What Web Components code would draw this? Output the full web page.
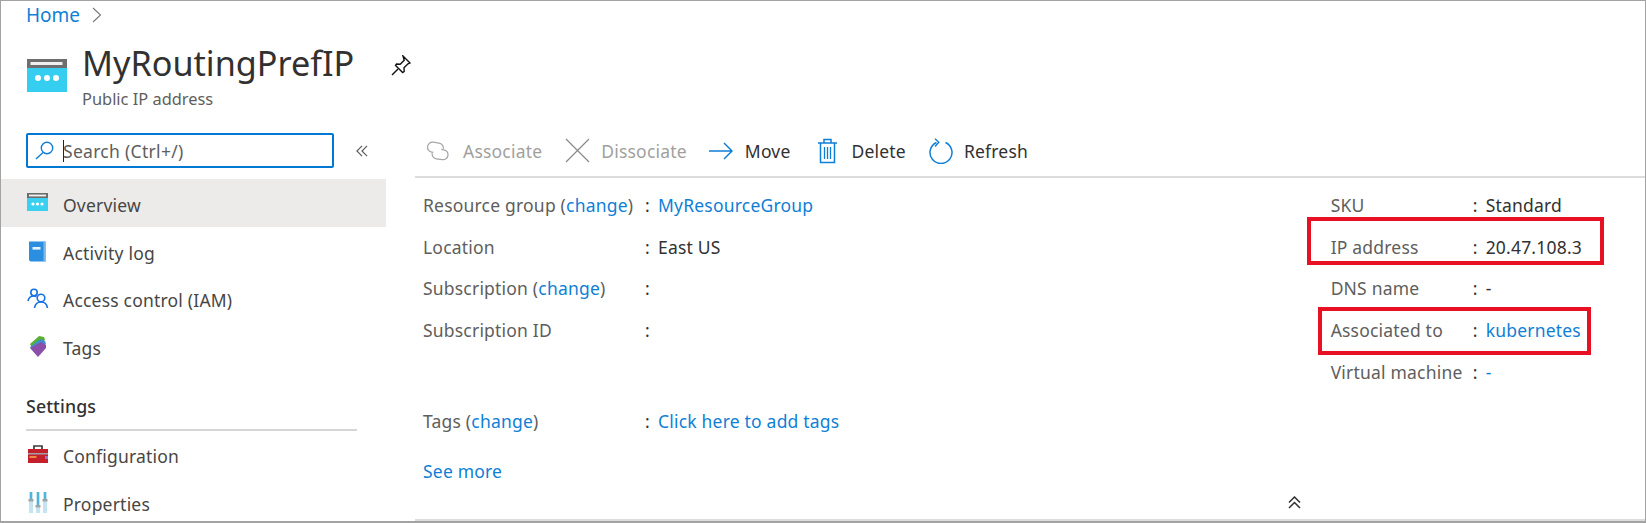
<!DOCTYPE html>
<html lang="en"><head><meta charset="utf-8"><title>MyRoutingPrefIP</title>
<style>
html,body{margin:0;padding:0;background:#fff}
body{font-family:"Noto Sans","Open Sans",sans-serif;color:#323130}
az-row a,az-essentials>a{color:#0f7fd6}
</style></head><body>
<az-page>
  <az-breadcrumb slot="crumb">Home</az-breadcrumb>
  <az-title slot="title" heading="MyRoutingPrefIP" sub="Public IP address"></az-title>
  <az-sidebar slot="side">
    <az-search></az-search>
    <az-nav icon="overview" active>Overview</az-nav>
    <az-nav icon="log">Activity log</az-nav>
    <az-nav icon="iam">Access control (IAM)</az-nav>
    <az-nav icon="tags">Tags</az-nav>
    <az-navhead>Settings</az-navhead>
    <az-nav icon="config">Configuration</az-nav>
    <az-nav icon="props">Properties</az-nav>
  </az-sidebar>
  <az-main slot="main">
    <az-toolbar>
      <az-tool icon="link" disabled style="--iw:26px;--gap:13px;--mr:23px">Associate</az-tool>
      <az-tool icon="x" disabled style="--iw:25px;--gap:11px;--mr:22px">Dissociate</az-tool>
      <az-tool icon="arrow" style="--iw:24px;--gap:12px;--mr:26px">Move</az-tool>
      <az-tool icon="trash" style="--iw:21px;--gap:14px;--mr:23px">Delete</az-tool>
      <az-tool icon="refresh" style="--iw:24px;--gap:11px;--mr:0px">Refresh</az-tool>
    </az-toolbar>
    <az-essentials>
      <az-col slot="left" style="--lw:222px">
        <az-row><span slot="label">Resource group (<a>change</a>)</span><a>MyResourceGroup</a></az-row>
        <az-row><span slot="label">Location</span>East US</az-row>
        <az-row><span slot="label">Subscription (<a>change</a>)</span></az-row>
        <az-row><span slot="label">Subscription ID</span></az-row>
        <az-row class="tags"><span slot="label">Tags (<a>change</a>)</span><a>Click here to add tags</a></az-row>
      </az-col>
      <az-col slot="right" style="--lw:142px">
        <az-row><span slot="label">SKU</span>Standard</az-row>
        <az-row marked="wide"><span slot="label">IP address</span>20.47.108.3</az-row>
        <az-row><span slot="label">DNS name</span>-</az-row>
        <az-row marked="narrow"><span slot="label">Associated to</span><a>kubernetes</a></az-row>
        <az-row><span slot="label">Virtual machine</span><a>-</a></az-row>
      </az-col>
      <a slot="more">See more</a>
    </az-essentials>
  </az-main>
</az-page>
<script>
const ICONS={
overview:`<svg viewBox="0 0 22 22" width="22" height="22"><rect x="0" y="1" width="21" height="5" fill="#6d6d6d"/><rect x="2" y="2.6" width="17" height="1.8" fill="#f2f2f2"/><rect x="0" y="6" width="21" height="13" fill="#3cd0f0"/><circle cx="6" cy="12" r="1.6" fill="#fff"/><circle cx="10.5" cy="12" r="1.6" fill="#fff"/><circle cx="15" cy="12" r="1.6" fill="#fff"/></svg>`,
log:`<svg viewBox="0 0 22 22" width="22" height="22"><path d="M2 1.5h16.500v20H4a2 2 0 0 1-2-2z" fill="#2a8fe0"/><rect x="16.500" y="1.500" width="2" height="20" fill="#7ab8e8"/><rect x="5.500" y="7" width="8" height="2.600" fill="#e8f4fc"/></svg>`,
iam:`<svg viewBox="0 0 22 22" width="22" height="22" fill="none" stroke="#1670e0" stroke-width="1.600"><circle cx="7" cy="5.500" r="3.200"/><path d="M1 14c.5-3 2.500-5 6-5 1 0 2 .2 2.500.5"/><circle cx="14" cy="11" r="3.800"/><path d="M7.500 21c.5-3.500 3-6 6.500-6s6 2.500 6.500 6"/></svg>`,
tags:`<svg viewBox="0 0 22 24" width="22" height="24"><path d="M3 10 12 2l5 1 1 3-12 10z" fill="#5cb030"/><path d="M3 13 13 5l5 2 1 3-11 9z" fill="#3f8fd0"/><path d="M3 14 14 8l5 3v3l-8 9z" fill="#8a4fa8"/></svg>`,
config:`<svg viewBox="0 0 22 22" width="22" height="22"><path d="M7 6V3h8v3" fill="none" stroke="#3c3c3c" stroke-width="1.700"/><rect x="1" y="6" width="20" height="14" fill="#c4202c"/><rect x="1" y="10" width="20" height="1.500" fill="#9fa3a8"/><rect x="2.500" y="13" width="7" height="2" fill="#f08a40"/><rect x="18" y="13" width="3" height="3" fill="#9a70c8"/></svg>`,
props:`<svg viewBox="0 0 22 24" width="22" height="24"><rect x="2" y="2" width="4" height="21" fill="#c4e4f2"/><rect x="9" y="2" width="4" height="21" fill="#c4e4f2"/><rect x="16" y="2" width="4" height="21" fill="#c4e4f2"/><rect x="3" y="2" width="2" height="9" fill="#50b4e0"/><rect x="10" y="2" width="2" height="15" fill="#50b4e0"/><rect x="17" y="2" width="2" height="9" fill="#50b4e0"/><rect x="1.500" y="9" width="5" height="2.500" fill="#a0a4a8"/><rect x="8.500" y="15" width="5" height="2.500" fill="#a0a4a8"/><rect x="15.500" y="9" width="5" height="2.500" fill="#a0a4a8"/></svg>`,
link:`<svg viewBox="0 0 26 22" width="26" height="22" fill="none" stroke="#a6a6a6" stroke-width="1.250"><g transform="rotate(8 14 11)"><path d="M9.500 13H8a5 5 0 0 1 0-10h6a5 5 0 0 1 5 5"/><path d="M17 9h2.500a5 5 0 0 1 0 10h-6a5 5 0 0 1-5-5"/></g></svg>`,
x:`<svg viewBox="0 0 25 25" width="25" height="25" fill="none" stroke="#8a8a8a" stroke-width="1.200"><path d="M1 1l23 23M24 1 1 24"/></svg>`,
arrow:`<svg viewBox="0 0 24 18" width="24" height="18" fill="none" stroke="#0f7fd6" stroke-width="1.500"><path d="M0 9h23M15 1l8 8-8 8"/></svg>`,
trash:`<svg viewBox="0 0 21 26" width="21" height="26" fill="none" stroke="#0f7fd6" stroke-width="1.500"><path d="M1 5h19M7 5V1.500h7V5M3.500 5v19.500h14V5"/><path d="M7.500 9v12M10.500 9v12M13.500 9v12" stroke-width="1.300"/></svg>`,
refresh:`<svg viewBox="0 0 24 26" width="24" height="26" fill="none" stroke="#0f7fd6" stroke-width="1.500"><path d="M16.500 4.500a11 11 0 1 1-9 0"/><path d="M6 .8l3.800 3.500L6 8.500" stroke-width="1.400"/></svg>`
};
function def(name,css,html){
  customElements.define(name,class extends HTMLElement{
    connectedCallback(){
      if(this.shadowRoot)return;
      const r=this.attachShadow({mode:"open"});
      const body=typeof html==="function"?html(this):html;
      r.innerHTML=`<style>${css}</style>${body}`;
    }
  });
}
def("az-page",`:host{display:flex;flex-direction:column;box-sizing:border-box;width:1646px;height:523px;overflow:hidden;border:1px solid #a3a3a3;border-width:1px 1px 2px 1px;background:#fff}
.body{display:flex;flex:1;min-height:0;margin-top:20px}`,
`<slot name="crumb"></slot><slot name="title"></slot><div class="body"><slot name="side"></slot><slot name="main"></slot></div>`);
def("az-breadcrumb",`:host{display:flex;align-items:center;height:28px;padding-left:25px;font-size:19px;color:#0f7fd6}
svg{margin-left:12px}`,
`<slot></slot><svg width="10" height="16" viewBox="0 0 10 16" fill="none" stroke="#777" stroke-width="1.100"><path d="M1 1l7.500 7L1 15"/></svg>`);
def("az-title",`:host{display:flex;height:84px;padding-left:26px;box-sizing:border-box;padding-top:15px}
.ic{width:40px;height:34px;margin-top:15px;margin-right:15px;flex:none}
.t{display:flex;flex-direction:column}
h1{margin:-3px 0 0;font-size:34.200px;line-height:44px;font-weight:400;color:#323130;white-space:nowrap}
p{margin:3px 0 0;font-size:16.400px;line-height:22px;color:#605e5c}
.pin{margin:11px 0 0 37px;flex:none}`,
el=>`<svg class="ic" viewBox="0 0 40 34"><rect width="40" height="9" fill="#6e6e6e"/><rect x="3.500" y="3" width="32" height="3" fill="#f0f0f0"/><rect y="9" width="40" height="24" fill="#35cdf0"/><circle cx="11" cy="19" r="3" fill="#fff"/><circle cx="20" cy="19" r="3" fill="#fff"/><circle cx="29" cy="19" r="3" fill="#fff"/></svg>
<div class="t"><h1>${el.getAttribute("heading")}</h1><p>${el.getAttribute("sub")}</p></div>
<svg class="pin" width="20" height="21" viewBox="0 0 20 21" fill="none" stroke="#111" stroke-width="1.400"><path d="M12 1l7 7-2 .8-4 4 .2 3.700-1.500 1L4.500 10.500l1-1.500 3.700.2 4-4z"/><path d="M7 14l-6 6" /></svg>`);
def("az-sidebar",`:host{display:block;width:385px;flex:none}`,`<slot></slot>`);
def("az-search",`:host{display:flex;align-items:center;height:35px;margin:0 0 11px 25px}
.box{display:flex;align-items:center;box-sizing:border-box;width:308px;height:35px;border:2px solid #0078d4;border-radius:2px;padding-left:7px;font-size:17.500px;color:#605e5c;letter-spacing:.3px}
.box svg{flex:none;margin-right:9px}
.caret{width:1px;height:22px;background:#222;margin-right:-1px}
.col{margin-left:22px;flex:none}`,
`<div class="box"><svg width="19" height="19" viewBox="0 0 19 19" fill="none" stroke="#0f7fd6" stroke-width="1.400"><circle cx="12" cy="7" r="5.700"/><path d="M8 11.500 1 18"/></svg><span class="caret"></span><span>Search (Ctrl+/)</span></div>
<svg class="col" width="12" height="12" viewBox="0 0 13 13" fill="none" stroke="#605e5c" stroke-width="1.300"><path d="M6.500 1 1 6.500 6.500 12M12 1 6.500 6.500 12 12"/></svg>`);
def("az-nav",`:host{display:flex;align-items:center;height:47.500px;padding-left:26px;font-size:17.500px;color:#484644;letter-spacing:.2px}
:host([active]){background:#edebe9;height:48px}
.i{display:flex;width:36px;flex:none;align-items:center}
.t{padding-top:4px}`,
el=>`<span class="i">${ICONS[el.getAttribute("icon")]}</span><span class="t"><slot></slot></span>`);
def("az-navhead",`:host{display:block;margin:0 29px 0 25px;height:61px;box-sizing:border-box;padding-top:24px;border-bottom:2px solid #d6d6d6;font-size:17.800px;line-height:24px;font-weight:500;color:#323130;letter-spacing:.1px}`,`<slot></slot>`);
def("az-main",`:host{display:flex;flex-direction:column;flex:1;min-width:0;margin-left:29px;border-bottom:2px solid #dcdcdc;position:relative}
svg{position:absolute;left:873px;bottom:10px}`,
`<slot></slot><svg width="13" height="13" viewBox="0 0 13 13" fill="none" stroke="#323130" stroke-width="1.500"><path d="M1 6.500 6.500 1 12 6.500M1 12 6.500 6.500 12 12"/></svg>`);
def("az-toolbar",`:host{display:flex;align-items:center;height:43px;box-sizing:content-box;padding:0 0 0 9px;border-bottom:2px solid #dcdcdc}
.in{display:flex;align-items:center;height:35px;margin-bottom:8px}`,`<div class="in"><slot></slot></div>`);
def("az-tool",`:host{display:flex;align-items:center;margin-right:var(--mr);font-size:17.500px;color:#323130;letter-spacing:.2px;white-space:nowrap}
:host([disabled]){color:#a19f9d}
.i{display:flex;justify-content:center;width:var(--iw);margin-right:var(--gap);flex:none}`,
el=>`<span class="i">${ICONS[el.getAttribute("icon")]}</span><slot></slot>`);
def("az-essentials",`:host{display:block;flex:1;position:relative;padding:6px 0 0 8px;font-size:17.500px;color:#484644}
.cols{display:flex;justify-content:space-between;padding-right:63px}
::slotted(a){color:#0f7fd6;font-size:17.500px;letter-spacing:.2px;display:inline-block}
.more{margin-top:18px}`,
`<div class="cols"><slot name="left"></slot><slot name="right"></slot></div><div class="more"><slot name="more"></slot></div>`);
def("az-col",`:host{display:block}`,`<slot></slot>`);
def("az-row",`:host{display:grid;grid-template-columns:var(--lw) 13px auto;align-items:center;height:41.700px;font-size:17.500px;color:#323130;letter-spacing:.2px;white-space:nowrap;position:relative}
:host(.tags){margin-top:49px}
.l{color:#605e5c}
.m{position:absolute;border:4px solid #e81123;box-sizing:border-box;pointer-events:none}
.wide{left:-24px;top:-9px;width:297px;height:48px}
.narrow{left:-13px;top:-2px;width:273px;height:48px}`,
el=>{const m=el.getAttribute("marked");return `<span class="l"><slot name="label"></slot></span><span class="c">:</span><span><slot></slot></span>${m?`<span class="m ${m}"></span>`:""}`});
</script>
</body></html>
